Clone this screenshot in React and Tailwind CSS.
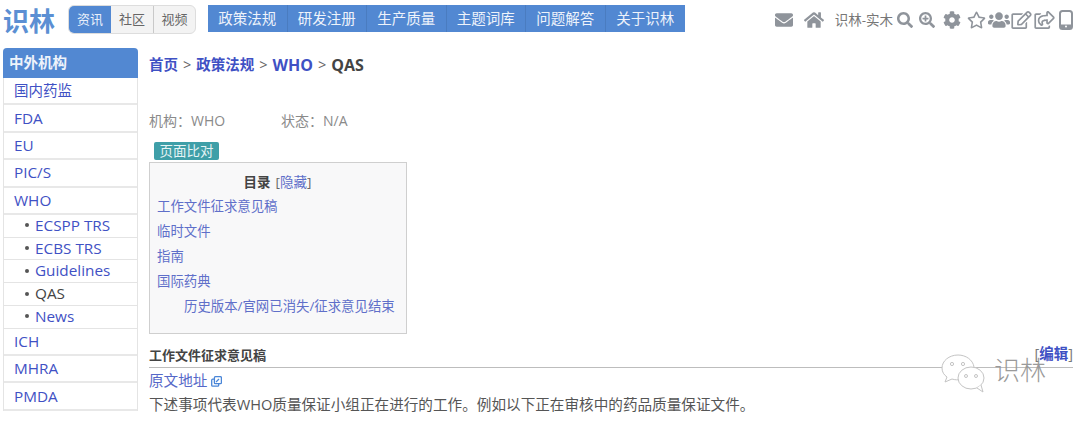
import React from "react";
import { FaEnvelope, FaHome, FaSearch, FaSearchPlus, FaCog, FaRegStar, FaUsers, FaRegEdit, FaRegShareSquare } from "react-icons/fa";

const font = "font-['Open_Sans','Noto_Sans_CJK_SC',sans-serif]";
const navItems = ["政策法规", "研发注册", "生产质量", "主题词库", "问题解答", "关于识林"];

function Row({ label, cjk }) {
  return (
    <div className={"h-[27.4px] flex items-center pl-[10px] border-b-2 border-[#e8e8e8] text-[#3f51c4] " + (cjk ? "text-[14.5px]" : "text-[15.3px]")}>{label}</div>
  );
}
function Sub({ label, dark }) {
  return (
    <div className="h-[22.75px] flex items-center pl-[21px] pb-[1px] border-b border-[#e4e4e4] text-[15.3px] text-[#3f51c4]">
      <span className="w-[4px] h-[4px] rounded-full bg-[#555] mr-[6px]" />
      <span className={dark ? "text-[#444]" : ""}>{label}</span>
    </div>
  );
}
function TocLink({ children, className = "" }) {
  return <div className={"h-[25px] flex items-center text-[13.4px] text-[#5f6fc9] " + className}>{children}</div>;
}
function Sep() {
  return <span className="mx-[5px] font-normal text-[#666]">&gt;</span>;
}

export default function App() {
  return (
    <div className={"relative w-[1080px] h-[423px] overflow-hidden bg-white " + font}>
      <header className="h-[48px] flex items-start">
        <div className="ml-[3px] mt-[3px] w-[55px] text-[26px] leading-[36px] font-bold text-[#5b8fd3]">识林</div>
        <div className="ml-[10px] mt-[5px] h-[29px] flex rounded-[6px] border border-[#ddd] bg-[#f3f3f3] text-[13px] overflow-hidden">
          <div className="w-[42px] flex items-center justify-center bg-[#5288d2] text-[#e8effa]">资讯</div>
          <div className="w-[43px] flex items-center justify-center border-r border-[#c9c9c9] text-[#666]">社区</div>
          <div className="w-[41px] flex items-center justify-center text-[#666]">视频</div>
        </div>
        <nav className="ml-[12px] mt-[5px] h-[27px] flex bg-[#5288d2] text-[14.5px] text-[#eef3fb]">
          {navItems.map((n, i) => (
            <div key={n} className={"w-[79.5px] flex items-center justify-center " + (i < 5 ? "border-r border-[#4a7cc0]" : "")}>{n}</div>
          ))}
        </nav>
        <div className="ml-auto mt-[10px] mr-[7px] flex items-center text-[#8f949b]">
          <FaEnvelope className="w-[18px] h-[18px] mr-[11px]" />
          <FaHome className="w-[20px] h-[18px] mr-[11px]" />
          <span className="text-[13.5px] text-[#777] mr-[4px]">识林-实木</span>
          <FaSearch className="w-[16px] h-[16px] mr-[6px]" />
          <FaSearchPlus className="w-[16px] h-[16px] mr-[8px]" />
          <FaCog className="w-[18px] h-[18px] mr-[6px]" />
          <FaRegStar className="w-[19px] h-[18px] mr-[2px]" />
          <FaUsers className="w-[22px] h-[18px] mr-[1px]" />
          <FaRegEdit className="w-[21px] h-[18px] mr-[2px]" />
          <FaRegShareSquare className="w-[21px] h-[18px] mr-[4px]" />
          <svg width="14" height="20" viewBox="0 0 14 20" fill="none" stroke="currentColor">
            <rect x="1" y="1" width="12" height="18" rx="2.5" strokeWidth="2" />
            <rect x="1" y="14.5" width="12" height="4" fill="currentColor" stroke="none" />
            <circle cx="7" cy="16.5" r="1" fill="#fff" stroke="none" />
          </svg>
        </div>
      </header>

      <div className="flex items-start">
        <aside className="ml-[3px] w-[135px] shrink-0 border-x border-[#e4e4e4] rounded-t-[4px]">
          <div className="-mx-px h-[30px] flex items-center pl-[6px] rounded-t-[4px] bg-[#5288d2] text-[14.5px] font-bold text-[#eef3fb]">中外机构</div>
          <Row label="国内药监" cjk />
          <Row label="FDA" />
          <Row label="EU" />
          <Row label="PIC/S" />
          <Row label="WHO" />
          <Sub label="ECSPP TRS" />
          <Sub label="ECBS TRS" />
          <Sub label="Guidelines" />
          <Sub label="QAS" dark />
          <Sub label="News" />
          <Row label="ICH" />
          <Row label="MHRA" />
          <Row label="PMDA" />
        </aside>

        <main className="ml-[11px] flex-1 mr-[7px]">
          <div className="h-[33px] pt-px flex items-center text-[14.5px] font-bold text-[#3f51c4]">
            <span>首页</span>
            <Sep />
            <span>政策法规</span>
            <Sep />
            <span className="text-[16px]">WHO</span>
            <Sep />
            <span className="text-[#444] text-[16px]">QAS</span>
          </div>
          <div className="mt-[29px] h-[20px] flex items-center text-[14px] text-[#8a8a8a]">
            <span className="w-[132px]">机构：WHO</span>
            <span>状态：N/A</span>
          </div>
          <div className="mt-[12px] ml-[5px] w-[65px] h-[18px] flex items-center justify-center rounded-[2px] bg-[#3f9fa8] text-[13.5px] text-[#e6f4f5]">页面比对</div>
          <div className="mt-[2px] w-[258px] h-[172px] border border-[#cfcfcf] bg-[#f8f8f9] pl-[7px] pt-[7px]">
            <div className="h-[24px] flex items-center justify-center text-[13.5px] pr-[8px] text-[#666]">
              <span className="font-bold text-[#444] mr-[5px]">目录</span>[<span className="text-[#5f6fc9]">隐藏</span>]
            </div>
            <TocLink>工作文件征求意见稿</TocLink>
            <TocLink>临时文件</TocLink>
            <TocLink>指南</TocLink>
            <TocLink>国际药典</TocLink>
            <TocLink className="pl-[27px]">历史版本/官网已消失/征求意见结束</TocLink>
          </div>
          <div className="mt-[7px] h-[27px] flex items-start justify-between pt-[5px] border-b border-[#bdbdbd]">
            <span className="text-[13px] leading-[18px] font-bold text-[#444]">工作文件征求意见稿</span>
            <span className="text-[14.5px] leading-[16px] font-bold text-[#3f51c4]"><span className="font-normal text-[#777]">[</span>编辑<span className="font-normal text-[#777]">]</span></span>
          </div>
          <div className="h-[26px] flex items-center text-[14.6px] text-[#5568c8]">
            原文地址
            <svg className="ml-[4px]" width="11" height="11" viewBox="0 0 11 11" fill="none" stroke="#4a86d8" strokeWidth="1.3">
              <rect x="0.7" y="3.2" width="7" height="7" rx="1" />
              <rect x="3.4" y="0.7" width="7" height="7" rx="1" fill="#fff" />
              <path d="M5 6l3-3" />
            </svg>
          </div>
          <div className="h-[22px] flex items-center text-[14.62px] text-[#555]">下述事项代表WHO质量保证小组正在进行的工作。例如以下正在审核中的药品质量保证文件。</div>
        </main>
      </div>

      <div className="absolute left-[941px] top-[354px] flex items-start text-[#9a9a9a]">
        <svg width="46" height="39" viewBox="0 0 46 39" fill="#fff" stroke="#c4c4c4" strokeWidth="1">
          <path d="M17 1C8 1 1 7 1 14c0 4 2 7 5 9l-2 5 7-3c3 1 6 1 9 .5C27 24 33 19 33 13 32 6 25 1 17 1z" />
          <ellipse cx="30" cy="24" rx="13" ry="11" />
          <path d="M36 34l6 4-2-7" />
          <circle cx="11" cy="10" r="1.6" />
          <circle cx="22" cy="10" r="1.6" />
          <circle cx="25" cy="22" r="1.5" />
          <circle cx="35" cy="22" r="1.5" />
        </svg>
        <span className="ml-[7px] mt-[-2px] text-[26px] leading-[36px] font-light">识林</span>
      </div>
    </div>
  );
}
